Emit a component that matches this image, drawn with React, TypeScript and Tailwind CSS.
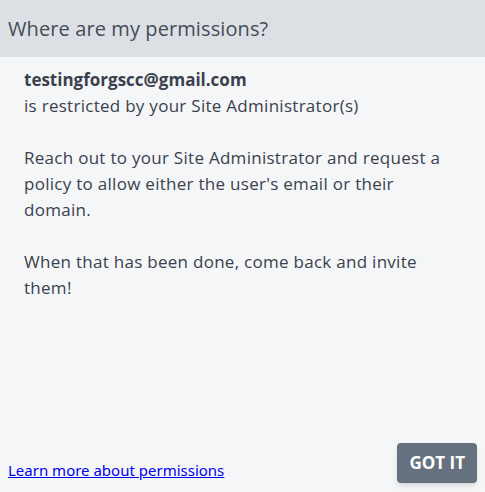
export default function App() {
  return (
    <div
      className="flex flex-col w-[485px] h-[492px] bg-[#f5f6f8] text-[#3a414c]"
      style={{ fontFamily: "'Open Sans', 'Noto Sans', sans-serif" }}
    >
      <div className="h-[57px] bg-[#dce0e4] flex items-center px-2 text-[20px] tracking-[0.1px] text-[#454c56]">
        Where are my permissions?
      </div>
      <div className="flex-1 px-6 pt-[10px] text-[17px] leading-[26px] tracking-[0.28px]">
        <div className="font-bold tracking-normal">testingforgscc@gmail.com</div>
        <div>is restricted by your Site Administrator(s)</div>
        <p className="mt-[26px]">
          Reach out to your Site Administrator and request a policy to allow
          either the user's email or their domain.
        </p>
        <p className="mt-[26px]">
          When that has been done, come back and invite them!
        </p>
      </div>
      <div className="flex items-end justify-between px-2 pb-[9px]">
        <a
          href="#"
          className="text-[15px] text-[#0000ee] underline mb-[2px]"
          style={{ fontFamily: "'Noto Sans', sans-serif" }}
        >
          Learn more about permissions
        </a>
        <button
          type="button"
          className="h-[40px] px-3 rounded-[4px] bg-[#65717e] text-white text-[17px] font-bold shadow-md"
        >
          GOT IT
        </button>
      </div>
    </div>
  );
}
